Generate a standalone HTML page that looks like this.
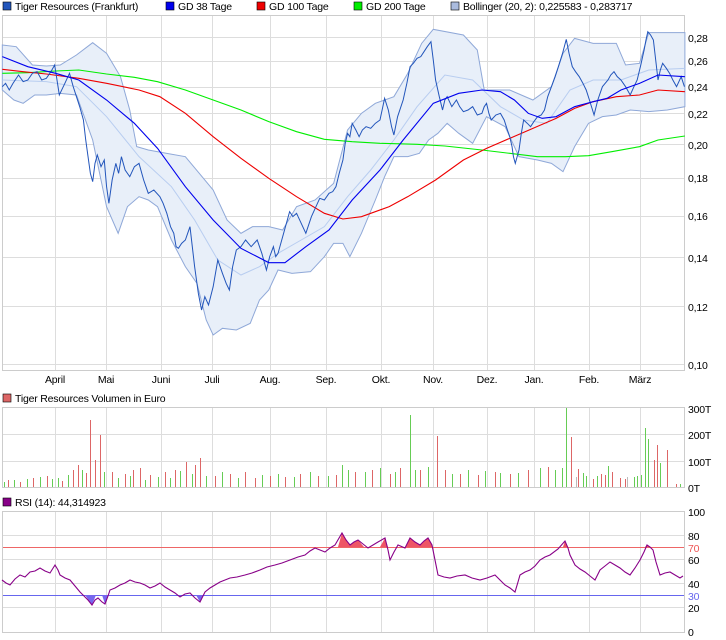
<!DOCTYPE html>
<html><head><meta charset="utf-8"><style>
body{margin:0;background:#fff;width:726px;height:640px;overflow:hidden;font-family:"Liberation Sans",sans-serif;}
svg{display:block}
text{font-family:"Liberation Sans",sans-serif;font-size:10.5px;fill:#000;letter-spacing:-0.2px}
</style></head><body>
<svg width="726" height="640" viewBox="0 0 726 640">
<!-- legend -->
<rect x="3" y="2" width="8" height="8" fill="#2255bb" stroke="#000" stroke-width="0.6"/>
<text x="15" y="10">Tiger Resources (Frankfurt)</text>
<rect x="166" y="2" width="8" height="8" fill="#0000ee" stroke="#000" stroke-width="0.6"/>
<text x="178" y="10">GD 38 Tage</text>
<rect x="257" y="2" width="8" height="8" fill="#ee0000" stroke="#000" stroke-width="0.6"/>
<text x="269" y="10">GD 100 Tage</text>
<rect x="354" y="2" width="8" height="8" fill="#00ee00" stroke="#000" stroke-width="0.6"/>
<text x="366" y="10">GD 200 Tage</text>
<rect x="451" y="2" width="8" height="8" fill="#aabbdd" stroke="#000" stroke-width="0.6"/>
<text x="463" y="10">Bollinger (20, 2): 0,225583 - 0,283717</text>

<!-- main frame -->
<rect x="2.5" y="15.5" width="682" height="355" fill="#fff" stroke="#ccc"/>
<g stroke="#ddd" stroke-width="1">
<line x1="55.5" y1="16" x2="55.5" y2="370"/><line x1="106.5" y1="16" x2="106.5" y2="370"/><line x1="161.5" y1="16" x2="161.5" y2="370"/><line x1="212.5" y1="16" x2="212.5" y2="370"/><line x1="270.5" y1="16" x2="270.5" y2="370"/><line x1="326.5" y1="16" x2="326.5" y2="370"/><line x1="381.5" y1="16" x2="381.5" y2="370"/><line x1="433.5" y1="16" x2="433.5" y2="370"/><line x1="487.5" y1="16" x2="487.5" y2="370"/><line x1="534.5" y1="16" x2="534.5" y2="370"/><line x1="589.5" y1="16" x2="589.5" y2="370"/><line x1="640.5" y1="16" x2="640.5" y2="370"/>
<line x1="3" y1="37.5" x2="684" y2="37.5"/><line x1="3" y1="61.5" x2="684" y2="61.5"/><line x1="3" y1="87.5" x2="684" y2="87.5"/><line x1="3" y1="113.5" x2="684" y2="113.5"/><line x1="3" y1="144.5" x2="684" y2="144.5"/><line x1="3" y1="178.5" x2="684" y2="178.5"/><line x1="3" y1="216.5" x2="684" y2="216.5"/><line x1="3" y1="257.5" x2="684" y2="257.5"/><line x1="3" y1="306.5" x2="684" y2="306.5"/><line x1="3" y1="364.5" x2="684" y2="364.5"/>
</g>
<g transform="scale(0.46339,0.33333)" fill="none">
<polygon fill="#e8eff9" stroke="#8fa8d8" stroke-width="1" vector-effect="non-scaling-stroke" points="5,135 35,140 70,195 100,198 130,195 165,165 200,128 230,160 260,230 280,330 295,440 320,450 360,460 400,470 430,520 460,570 490,660 520,700 545,680 580,680 610,690 640,620 680,600 720,550 750,390 780,340 810,310 850,290 880,220 910,130 935,88 1000,105 1030,150 1045,270 1100,270 1150,300 1190,260 1215,160 1240,115 1280,130 1330,130 1350,195 1380,190 1400,98 1478,98 1478,320 1440,330 1400,335 1360,330 1330,345 1300,350 1270,370 1240,440 1215,515 1190,490 1160,480 1120,470 1090,380 1050,350 1020,430 990,400 965,370 945,400 925,420 905,460 880,470 850,470 830,530 810,600 780,700 755,770 740,730 720,730 700,770 670,815 630,820 600,810 580,870 560,900 540,970 510,990 480,985 460,1005 445,960 425,850 400,800 370,720 340,620 320,600 300,590 275,620 255,700 230,620 200,420 165,285 130,280 100,285 75,285 50,310 30,300 5,270"/>
<polyline stroke="#b8cdf0" stroke-width="1" vector-effect="non-scaling-stroke" points="5,240 100,245 165,260 230,350 300,470 370,560 420,660 470,780 520,825 560,800 600,760 650,720 700,680 750,590 800,510 850,420 900,320 960,225 1020,240 1080,320 1130,360 1180,370 1230,270 1280,240 1340,240 1400,210 1478,205"/>
<polyline stroke="#00ee00" stroke-width="1.1" vector-effect="non-scaling-stroke" points="5,220 60,218 120,213 170,210 230,222 290,232 340,245 400,270 460,300 520,330 580,365 640,395 700,418 760,425 820,430 900,433 960,438 1040,450 1100,460 1160,470 1220,470 1270,467 1320,455 1380,440 1420,420 1478,408"/>
<polyline stroke="#ee0000" stroke-width="1.1" vector-effect="non-scaling-stroke" points="5,208 50,215 100,222 170,235 230,250 300,270 345,290 400,340 460,410 520,475 580,535 640,590 700,640 740,657 780,650 840,620 880,590 940,540 1000,480 1050,445 1100,415 1150,385 1200,355 1240,325 1280,305 1330,290 1380,285 1420,270 1478,275"/>
<polyline stroke="#2255bb" stroke-width="1" vector-effect="non-scaling-stroke" points="5,260 12,250 20,270 28,250 40,225 50,245 60,240 70,220 80,215 90,240 100,235 110,215 118,195 128,285 140,250 150,220 158,260 165,290 172,320 180,360 185,420 190,470 195,520 200,545 205,490 210,465 218,500 225,480 230,560 235,610 242,540 250,490 256,520 262,470 270,510 280,530 290,500 300,490 310,540 320,580 332,570 345,590 352,610 360,640 368,680 375,700 380,740 385,745 392,730 400,720 405,700 410,680 415,740 420,800 428,880 435,930 442,890 450,915 460,860 470,780 480,820 488,850 495,870 502,800 510,750 520,740 530,720 542,740 555,720 565,760 575,810 582,770 590,740 595,770 600,760 612,700 625,635 632,650 640,640 650,670 660,700 672,650 690,595 700,600 710,580 718,575 725,560 732,520 740,480 745,430 750,400 755,410 760,370 768,390 775,410 782,390 790,380 800,385 810,370 820,360 830,295 838,330 845,380 850,405 858,350 870,300 878,250 885,200 892,190 900,175 908,170 915,155 922,140 930,125 935,180 940,240 948,290 955,330 960,300 965,290 975,320 985,300 992,320 1000,335 1010,330 1020,320 1030,345 1040,340 1045,320 1050,310 1055,340 1060,360 1070,345 1080,340 1088,360 1095,390 1100,410 1105,440 1108,470 1112,490 1116,470 1120,450 1125,400 1130,360 1138,370 1145,380 1152,365 1160,350 1168,345 1175,330 1182,290 1190,260 1198,230 1205,200 1214,160 1222,118 1228,160 1235,200 1242,215 1250,230 1258,250 1265,270 1272,300 1282,345 1290,300 1300,260 1306,250 1312,240 1318,225 1325,215 1332,230 1340,240 1350,260 1360,285 1368,260 1375,240 1382,200 1390,150 1394,120 1398,95 1404,105 1410,120 1415,180 1420,240 1425,210 1430,190 1438,205 1445,220 1452,240 1460,260 1465,245 1470,230 1477,260"/>
<polyline stroke="#0000ee" stroke-width="1.1" vector-effect="non-scaling-stroke" points="5,170 60,200 120,220 170,240 230,300 290,370 340,445 400,560 460,660 520,745 580,788 615,788 660,740 710,690 760,600 820,510 870,420 935,310 990,280 1040,270 1080,275 1110,300 1140,340 1170,355 1200,350 1240,320 1280,305 1310,295 1340,270 1380,250 1420,225 1478,230"/>
</g>
<g>
<text x="688" y="42">0,28</text><text x="688" y="65">0,26</text><text x="688" y="91">0,24</text><text x="688" y="118">0,22</text><text x="688" y="149">0,20</text><text x="688" y="182">0,18</text><text x="688" y="220">0,16</text><text x="688" y="262">0,14</text><text x="688" y="311">0,12</text><text x="688" y="369">0,10</text>
</g>
<g>
<text x="55" y="383" text-anchor="middle">April</text><text x="106" y="383" text-anchor="middle">Mai</text><text x="161" y="383" text-anchor="middle">Juni</text><text x="212" y="383" text-anchor="middle">Juli</text><text x="270" y="383" text-anchor="middle">Aug.</text><text x="326" y="383" text-anchor="middle">Sep.</text><text x="381" y="383" text-anchor="middle">Okt.</text><text x="433" y="383" text-anchor="middle">Nov.</text><text x="487" y="383" text-anchor="middle">Dez.</text><text x="534" y="383" text-anchor="middle">Jan.</text><text x="589" y="383" text-anchor="middle">Feb.</text><text x="640" y="383" text-anchor="middle">März</text>
</g>

<!-- volume -->
<rect x="3" y="394" width="8" height="8" fill="#dd6666" stroke="#000" stroke-width="0.6"/>
<text x="15" y="402">Tiger Resources Volumen in Euro</text>
<rect x="2.5" y="407.5" width="682" height="80" fill="#fff" stroke="#ccc"/>
<g stroke="#ddd"><line x1="3" y1="434.5" x2="684" y2="434.5"/><line x1="3" y1="461.5" x2="684" y2="461.5"/>
<line x1="55.5" y1="408" x2="55.5" y2="487"/><line x1="106.5" y1="408" x2="106.5" y2="487"/><line x1="161.5" y1="408" x2="161.5" y2="487"/><line x1="212.5" y1="408" x2="212.5" y2="487"/><line x1="270.5" y1="408" x2="270.5" y2="487"/><line x1="326.5" y1="408" x2="326.5" y2="487"/><line x1="381.5" y1="408" x2="381.5" y2="487"/><line x1="433.5" y1="408" x2="433.5" y2="487"/><line x1="487.5" y1="408" x2="487.5" y2="487"/><line x1="534.5" y1="408" x2="534.5" y2="487"/><line x1="589.5" y1="408" x2="589.5" y2="487"/><line x1="640.5" y1="408" x2="640.5" y2="487"/></g>
<g stroke-width="1">
<path stroke="#dd6666" d="M8.5 487V480M20.5 487V482M33.5 487V478M47.5 487V476M62.5 487V481M73.5 487V470M78.5 487V465M86.5 487V473M90.5 487V420M95.5 487V460M100.5 487V435M112.5 487V472M125.5 487V474M133.5 487V470M140.5 487V468M150.5 487V475M165.5 487V472M175.5 487V470M186.5 487V462M195.5 487V465M200.5 487V458M215.5 487V476M230.5 487V474M245.5 487V472M255.5 487V478M270.5 487V476M285.5 487V477M300.5 487V474M318.5 487V476M336.5 487V475M355.5 487V472M372.5 487V470M390.5 487V474M400.5 487V468M420.5 487V470M437.5 487V436M445.5 487V470M460.5 487V474M478.5 487V475M495.5 487V472M510.5 487V474M528.5 487V470M548.5 487V467M571.5 487V437M578.5 487V469M593.5 487V479M601.5 487V474M605.5 487V475M612.5 487V472M620.5 487V478M625.5 487V479M645.5 487V474M654.5 487V460M657.5 487V445M667.5 487V450M676.5 487V484"/>
<path stroke="#66cc55" d="M4.5 487V482M14.5 487V480M27.5 487V479M40.5 487V477M52.5 487V479M58.5 487V478M68.5 487V475M82.5 487V470M104.5 487V472M118.5 487V478M130.5 487V476M145.5 487V480M158.5 487V477M170.5 487V478M180.5 487V471M192.5 487V474M206.5 487V476M222.5 487V472M238.5 487V478M262.5 487V475M278.5 487V474M294.5 487V477M310.5 487V472M328.5 487V476M342.5 487V465M348.5 487V470M365.5 487V472M380.5 487V468M395.5 487V472M410.5 487V415M415.5 487V470M428.5 487V467M452.5 487V474M468.5 487V470M485.5 487V471M500.5 487V473M518.5 487V473M540.5 487V468M555.5 487V470M562.5 487V468M566.5 487V408M583.5 487V473M586.5 487V476M597.5 487V476M608.5 487V466M634.5 487V477M637.5 487V476M641.5 487V475M645.5 487V428M648.5 487V439M660.5 487V463M680.5 487V484"/>
<path stroke="#bbbbbb" d="M576.5 487V477M627.5 487V477"/>
</g>
<text x="688" y="413">300T</text><text x="688" y="439">200T</text><text x="688" y="466">100T</text><text x="688" y="492">0T</text>

<!-- RSI -->
<rect x="3" y="498" width="8" height="8" fill="#880088" stroke="#000" stroke-width="0.6"/>
<text x="15" y="506">RSI (14): 44,314923</text>
<rect x="2.5" y="511.5" width="682" height="121" fill="#fff" stroke="#ccc"/>
<g stroke="#ddd"><line x1="3" y1="535.5" x2="684" y2="535.5"/><line x1="3" y1="559.5" x2="684" y2="559.5"/><line x1="3" y1="583.5" x2="684" y2="583.5"/><line x1="3" y1="607.5" x2="684" y2="607.5"/>
<line x1="55.5" y1="512" x2="55.5" y2="632"/><line x1="106.5" y1="512" x2="106.5" y2="632"/><line x1="161.5" y1="512" x2="161.5" y2="632"/><line x1="212.5" y1="512" x2="212.5" y2="632"/><line x1="270.5" y1="512" x2="270.5" y2="632"/><line x1="326.5" y1="512" x2="326.5" y2="632"/><line x1="381.5" y1="512" x2="381.5" y2="632"/><line x1="433.5" y1="512" x2="433.5" y2="632"/><line x1="487.5" y1="512" x2="487.5" y2="632"/><line x1="534.5" y1="512" x2="534.5" y2="632"/><line x1="589.5" y1="512" x2="589.5" y2="632"/><line x1="640.5" y1="512" x2="640.5" y2="632"/></g>
<line x1="3" y1="547.5" x2="684" y2="547.5" stroke="#ee6666"/>
<line x1="3" y1="595.5" x2="684" y2="595.5" stroke="#6666ee"/>
<g stroke="none">
<polygon fill="#ee5566" points="338,547 342,533 350,545 358,540 364,547"/>
<polygon fill="#ee5566" points="380,547 385,538 388,547"/>
<polygon fill="#ee5566" points="406,547 410,538 420,545 428,538 432,545 432,547"/>
<polygon fill="#ee5566" points="563,547 565,541 568,547"/>
<polygon fill="#ee5566" points="645,547 647,545 651,547"/>
<polygon fill="#7766ee" points="85,595 92,605 96,595"/>
<polygon fill="#7766ee" points="102,595 105,604 108,595"/>
<polygon fill="#7766ee" points="196,595 200,602 204,595"/>
</g>
<polyline fill="none" stroke="#880088" stroke-width="1.1" points="2,580 6,583 10,585 15,579 20,575 25,577 30,572 35,571 40,568 45,571 50,573 55,565 58,570 60,575 65,578 70,580 75,586 80,592 84,596 88,600 92,605 95,600 98,598 102,602 105,604 108,596 110,590 115,588 120,585 125,583 130,580 135,582 140,583 145,585 150,588 155,586 160,583 165,587 170,590 175,593 180,597 185,594 190,593 195,598 200,602 205,592 210,588 215,585 220,582 230,578 237,577 245,575 252,573 260,570 267,567 275,565 282,563 290,560 298,557 305,555 310,551 315,548 320,550 325,552 330,548 335,545 342,533 346,540 350,545 354,542 358,540 363,544 368,548 373,545 378,542 385,538 388,550 390,560 394,552 398,545 405,548 410,538 415,542 420,545 424,541 428,538 432,545 435,560 438,575 444,577 450,578 457,576 465,575 472,578 480,580 487,578 495,575 500,580 505,585 510,588 515,592 518,582 520,575 525,572 530,570 535,566 540,560 545,557 550,555 558,549 565,541 568,548 570,555 573,561 575,565 580,569 585,572 590,576 595,580 598,574 600,570 605,566 610,562 615,565 620,568 625,572 630,575 635,568 640,560 644,552 647,545 650,547 653,550 656,562 660,575 665,573 670,572 675,575 680,578 683,576"/>
<text x="688" y="516">100</text><text x="688" y="540">80</text><text x="688" y="552" style="fill:#ee5555">70</text><text x="688" y="564">60</text><text x="688" y="588">40</text><text x="688" y="600" style="fill:#6666ee">30</text><text x="688" y="612">20</text><text x="688" y="636">0</text>
</svg>
</body></html>
